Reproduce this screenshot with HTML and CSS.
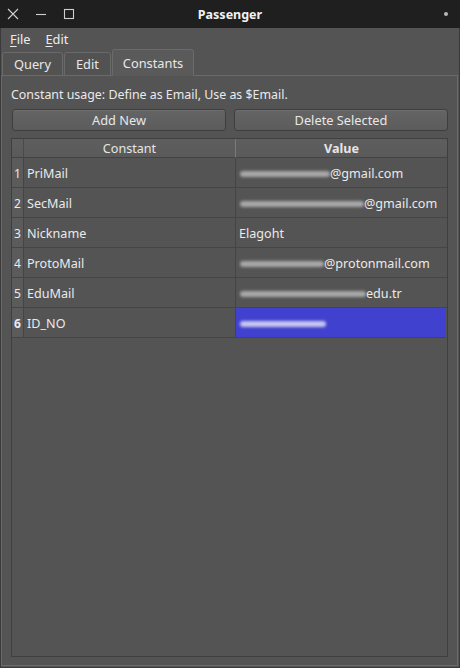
FILE: index.html
```html
<!DOCTYPE html>
<html>
<head>
<meta charset="utf-8">
<link rel="stylesheet" href="styles.css">
</head>
<body>
<div class="window">
  <header class="titlebar">
    <div class="controls">
      <svg width="12" height="12" viewBox="0 0 12 12"><path d="M1 1L11 11M11 1L1 11" stroke="#cfcfcf" stroke-width="1.1" fill="none"/></svg>
      <svg width="12" height="12" viewBox="0 0 12 12"><path d="M1 6.5H11" stroke="#cfcfcf" stroke-width="1.1" fill="none"/></svg>
      <svg width="12" height="12" viewBox="0 0 12 12"><rect x="1.5" y="1.5" width="9" height="9" stroke="#cfcfcf" stroke-width="1.1" fill="none"/></svg>
    </div>
    <div class="title">Passenger</div>
    <div class="right"><span class="dot"></span></div>
  </header>
  <nav class="menubar"><span><u>F</u>ile</span><span><u>E</u>dit</span></nav>
  <div class="tabs">
    <div class="tab">Query</div>
    <div class="tab">Edit</div>
    <div class="tab active">Constants</div>
  </div>
  <div class="pane">
    <p class="hint">Constant usage: Define as Email, Use as $Email.</p>
    <div class="buttons">
      <button class="btn">Add New</button>
      <button class="btn">Delete Selected</button>
    </div>
    <div class="table">
      <div class="hcell corner"></div>
      <div class="hcell">Constant</div>
      <div class="hcell bold last">Value</div>

      <div class="rnum">1</div><div class="cell">PriMail</div><div class="cell last"><span class="blur" style="width:90px"></span>@gmail.com</div>
      <div class="rnum">2</div><div class="cell">SecMail</div><div class="cell last"><span class="blur" style="width:124px"></span>@gmail.com</div>
      <div class="rnum">3</div><div class="cell">Nickname</div><div class="cell last">Elagoht</div>
      <div class="rnum">4</div><div class="cell">ProtoMail</div><div class="cell last"><span class="blur" style="width:84px"></span>@protonmail.com</div>
      <div class="rnum">5</div><div class="cell">EduMail</div><div class="cell last"><span class="blur" style="width:126px"></span>edu.tr</div>
      <div class="rnum sel">6</div><div class="cell">ID_NO</div><div class="cell last selected"><span class="blur light" style="width:86px"></span></div>
    </div>
  </div>
</div>
</body>
</html>
```

FILE: styles.css
```css
* { box-sizing: border-box; }
html, body { margin: 0; padding: 0; }
body {
  width: 460px;
  height: 668px;
  background: #545454;
  font-family: "Noto Sans", "DejaVu Sans", sans-serif;
  font-size: 12.4px;
  color: #e6e6e6;
  overflow: hidden;
}
.window {
  width: 460px;
  height: 668px;
  display: flex;
  flex-direction: column;
  background: #545454;
  border-left: 1px solid #3a3a3a;
  border-right: 1px solid #3a3a3a;
  border-bottom: 1px solid #3a3a3a;
}
.titlebar {
  height: 28px;
  flex: none;
  background: #1f1f1f;
  display: grid;
  grid-template-columns: 1fr auto 1fr;
  align-items: center;
  margin: 0 -1px;
}
.controls {
  display: flex;
  gap: 16px;
  padding-left: 7px;
  align-items: center;
}
.controls svg { display: block; }
.title {
  font-weight: bold;
  font-size: 12.5px;
  color: #f2f2f2;
}
.right { display: flex; justify-content: flex-end; padding-right: 12px; }
.dot {
  width: 4px; height: 4px; border-radius: 50%;
  background: #b8b8b8;
}
.menubar {
  height: 21px;
  flex: none;
  display: flex;
  align-items: center;
  gap: 15px;
  padding-left: 9px;
  font-size: 12.8px;
  color: #ececec;
}
.menubar u { text-decoration-thickness: 1px; text-underline-offset: 2px; }
.tabs {
  height: 27px;
  flex: none;
  display: flex;
  align-items: flex-end;
  padding-left: 1px;
  gap: 0;
  position: relative;
  z-index: 1;
  margin-bottom: -1px;
}
.tab {
  height: 24px;
  padding: 0 11px;
  display: flex;
  align-items: center;
  border: 1px solid #6a6a6a;
  border-radius: 3px 3px 0 0;
  background: #525252;
  color: #e8e8e8;
  font-size: 12.8px;
}
.tab + .tab { margin-left: 1px; }
.tab.active {
  height: 27px;
  padding: 0 10px;
  background: #5a5a5a;
  border-bottom-color: #5a5a5a;
}
.pane {
  flex: 1;
  border: 1px solid #6a6a6a;
  margin: 0 1px 1px 0;
  padding: 0 9px 8px 9px;
  display: flex;
  flex-direction: column;
}
.hint {
  margin: 11px 0 0 0;
  font-size: 12.4px;
  color: #eaeaea;
  line-height: 16px;
}
.buttons {
  display: flex;
  gap: 8px;
  margin-top: 6px;
  padding: 0 0 0 1px;
}
.btn {
  flex: 1;
  height: 22px;
  font-family: inherit;
  font-size: 12.8px;
  color: #e8e8e8;
  background: linear-gradient(#646464, #5c5c5c);
  border: 1px solid #3e3e3e;
  border-radius: 3px;
  box-shadow: inset 0 1px 0 #6e6e6e;
  padding: 0;
}
.table {
  flex: 1;
  margin-top: 7px;
  border: 1px solid #3f3f3f;
  display: grid;
  grid-template-columns: 12px 212px 1fr;
  grid-template-rows: 19px repeat(6, 30px) 1fr;
  font-size: 12.6px;
  color: #eaeaea;
}
.hcell {
  background: linear-gradient(#5e5e5e, #5a5a5a);
  border-right: 1px solid #7a7a7a;
  border-bottom: 1px solid #434343;
  display: flex;
  align-items: center;
  justify-content: center;
  color: #e6e6e6;
}
.hcell.corner { border-right: 1px solid #4a4a4a; }
.hcell.last { border-right: none; }
.bold { font-weight: bold; }
.rnum {
  background: #5b5b5b;
  border-right: 1px solid #454545;
  border-bottom: 1px solid #454545;
  display: flex;
  align-items: center;
  justify-content: center;
  font-size: 12px;
  padding-top: 2px;
}
.rnum.sel { font-weight: bold; }
.cell {
  border-right: 1px solid #454545;
  border-bottom: 1px solid #454545;
  display: flex;
  align-items: center;
  padding-left: 3px;
  padding-top: 1px;
  white-space: nowrap;
  overflow: hidden;
}
.cell.last { border-right: none; }
.cell.selected {
  background: #4141cf;
  margin-right: 1px;
}
.blur {
  display: inline-block;
  height: 6px;
  background: #a8a8a8;
  filter: blur(1.8px);
  border-radius: 3px;
  margin-left: 1px;
  margin-top: 2px;
}
.blur.light { background: #c8c8f0; }
```
